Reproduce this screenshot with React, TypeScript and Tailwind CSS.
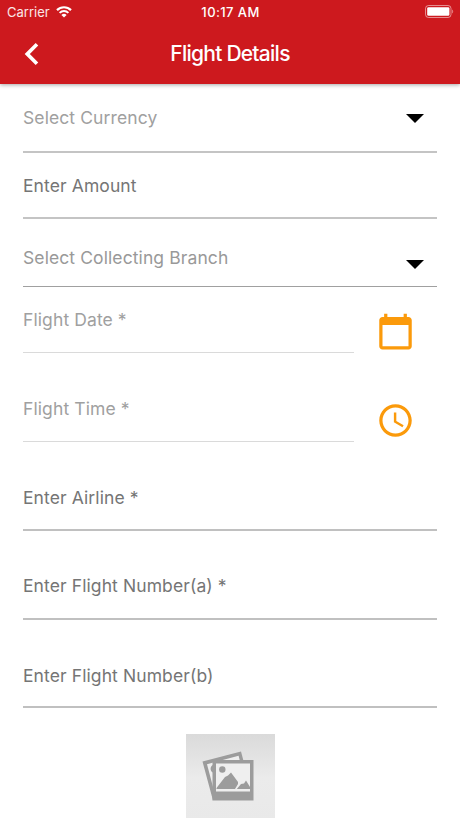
import React from 'react';
import { MdAccessTime, MdCalendarToday, MdChevronLeft } from 'react-icons/md';

function StatusBar() {
  return (
    <div className="grid h-6 grid-cols-3 items-center pl-[7px] pr-[6px] text-[13px] leading-6 text-white">
      <div className="flex items-center gap-[6px]">
        <span className="text-white/90">Carrier</span>
        <svg viewBox="0 0 16 12" className="h-[12px] w-[16px]" fill="none" stroke="white">
          <path d="M1 4.100a10 10 0 0 1 14 0" strokeWidth="2.200" />
          <path d="M3.600 6.900a6.300 6.300 0 0 1 8.800 0" strokeWidth="2" />
          <path d="M8 11.600 5.400 9a3.700 3.700 0 0 1 5.200 0z" fill="white" stroke="none" />
        </svg>
      </div>
      <span className="text-center font-medium tracking-[0.4px]">10:17 AM</span>
      <svg viewBox="0 0 29 13" className="mb-px h-[13px] w-[29px] justify-self-end">
        <rect x="0.5" y="0.5" width="25.5" height="12" rx="3" fill="none" stroke="white" strokeOpacity="0.5" />
        <rect x="2.2" y="2.2" width="22.2" height="8.6" rx="1.4" fill="white" />
        <path d="M27.2 4.5c1.3.5 1.3 3.5 0 4z" fill="white" fillOpacity="0.5" />
      </svg>
    </div>
  );
}

function Caret() {
  return (
    <svg viewBox="0 0 18 9" className="mr-[13px] h-[9px] w-[18px]">
      <path d="M0 0h18L9 9z" fill="black" />
    </svg>
  );
}

function PhotoPlaceholder() {
  return (
    <div className="h-[88px] w-[89px] bg-linear-to-b from-[#dadada] via-[#ebebeb] to-[#e9e9e9]">
      <svg viewBox="0 0 89 88" className="h-full w-full">
        <path d="M18 28.5 54 19l9 34-36 10z" fill="#efefef" />
        <path d="M16.500 27.500 55 17.500l2.400 9h-3.600l-1.200-4.800L21 30.200l6 22.800v13.500z" fill="#9c9c9c" />
        <path d="M27 31c-3.200 1-3.200 6.500 0 7.500z" fill="#9c9c9c" />
        <rect x="26.500" y="26" width="41" height="40.500" fill="#9c9c9c" />
        <rect x="30" y="29.500" width="34" height="28" fill="#efefef" />
        <circle cx="36.300" cy="35.500" r="3.200" fill="#9c9c9c" />
        <path d="M30.500 55v-1l8.500-11 3-1.500 3-3 7 9.500v2L49 55z" fill="#9c9c9c" />
        <path d="M50.800 55l4.200-5 3-.500 2-3 4 6.500v2z" fill="#9c9c9c" />
      </svg>
    </div>
  );
}

export default function App() {
  return (
    <div className="flex h-[818px] w-[460px] flex-col overflow-hidden bg-white font-['Inter','Noto_Sans',sans-serif]">
      <header className="h-[84px] shrink-0 bg-[#cd191e] shadow-[0_1px_4px_rgba(0,0,0,0.35)]">
        <StatusBar />
        <div className="grid h-[60px] grid-cols-[60px_1fr_60px] items-center">
          <button className="pl-[10px]" aria-label="Back">
            <MdChevronLeft className="size-[44px] text-white" />
          </button>
          <h1 className="text-center text-[21px] font-medium tracking-[-0.75px] text-white">Flight Details</h1>
        </div>
      </header>

      <main className="flex flex-col px-[23px] text-[17.5px] leading-6 tracking-[0.1px] text-[#757575]">
        {/* Payment */}
        <div className="flex h-[69px] items-start justify-between border-b-2 border-[#c4c4c4] pt-[22px] text-[#a0a0a0]">
          <span>Select Currency</span>
          <div className="pt-2">
            <Caret />
          </div>
        </div>
        <div className="h-[66px] border-b-2 border-[#c4c4c4] pt-[21px]">Enter Amount</div>
        <div className="flex h-[68px] items-start justify-between border-b border-[#a0a0a0] pt-[27px] text-[#999999]">
          <span>Select Collecting Branch</span>
          <div className="pt-[14px]">
            <Caret />
          </div>
        </div>

        {/* Date and time */}
        <div className="flex h-[66px] items-start">
          <div className="h-full w-[331px] border-b border-[#dadada] pt-[21px] text-[#a0a0a0]">Flight Date *</div>
          <MdCalendarToday className="ml-[22px] mt-[25px] size-[39px] shrink-0 text-[#fb9a0b]" />
        </div>
        <div className="flex h-[89px] items-start">
          <div className="h-full w-[331px] border-b border-[#dadada] pt-[44px] text-[#a0a0a0]">Flight Time *</div>
          <MdAccessTime className="ml-[22px] mt-[48px] size-[39px] shrink-0 text-[#fb9a0b]" />
        </div>

        {/* Flight */}
        <div className="h-[89px] border-b-2 border-[#c0c0c0] pt-[44px]">Enter Airline *</div>
        <div className="h-[89px] border-b-2 border-[#c0c0c0] pt-[43px]">Enter Flight Number(a) *</div>
        <div className="h-[88px] border-b-2 border-[#c0c0c0] pt-[44px]">Enter Flight Number(b)</div>

        <div className="flex justify-center pt-[26px]">
          <PhotoPlaceholder />
        </div>
      </main>
    </div>
  );
}
